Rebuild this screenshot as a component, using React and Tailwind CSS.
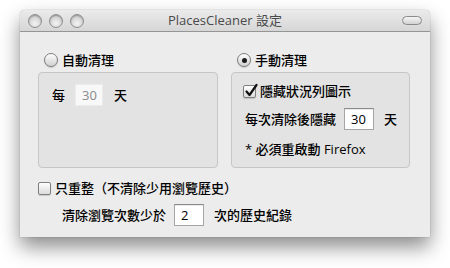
import React from "react";

const font = { fontFamily: '"Open Sans", "Noto Sans CJK TC", sans-serif' };

function Light() {
  return (
    <div className="w-[14px] h-[14px] rounded-full border border-[#8f8f8f] bg-[radial-gradient(circle_at_50%_70%,#f4f4f4_0%,#d6d6d6_55%,#b9b9b9_100%)] shadow-[inset_0_1px_1px_rgba(0,0,0,0.25)]" />
  );
}

function Radio({ checked }) {
  return (
    <div className="w-[14px] h-[14px] rounded-full border border-[#7c7c7c] bg-[linear-gradient(#ffffff,#e6e6e6_50%,#d2d2d2)] flex items-center justify-center shadow-[0_1px_1px_rgba(0,0,0,0.15)]">
      {checked && <div className="w-[5px] h-[5px] rounded-full bg-[#1a1a1a]" />}
    </div>
  );
}

function Check({ checked }) {
  return (
    <div className="w-[13px] h-[13px] rounded-[2px] border border-[#7f7f7f] bg-[linear-gradient(#ffffff,#ececec_50%,#dcdcdc)] relative shadow-[0_1px_1px_rgba(0,0,0,0.15)]">
      {checked && (
        <svg className="absolute left-[0px] top-[-3px]" width="15" height="15" viewBox="0 0 15 15">
          <path d="M2.5 8.5 L5.5 12 L12.5 2" fill="none" stroke="#111" strokeWidth="2.2" strokeLinecap="round" strokeLinejoin="round" />
        </svg>
      )}
    </div>
  );
}

function Field({ value, disabled, w = "w-[30px]" }) {
  return (
    <div
      className={`${w} h-[22px] flex items-center pl-[6px] text-[13px] leading-none ${
        disabled
          ? "bg-[#f8f8f8] text-[#8a8a8a] border border-[#ececec]"
          : "bg-white text-black border border-[#a5a5a5] border-t-[#8a8a8a] shadow-[inset_0_1px_0_rgba(0,0,0,0.08)]"
      }`}
    >
      {value}
    </div>
  );
}

export default function App() {
  return (
    <div className="w-[450px] h-[268px] bg-white overflow-hidden text-black font-medium" style={font}>
      <div className="ml-[20px] mt-[10px] w-[410px] h-[227px] bg-[#ececec] rounded-t-[5px] shadow-[0_10px_20px_rgba(0,0,0,0.45),0_0_1px_rgba(0,0,0,0.5)] flex flex-col">
        {/* title bar */}
        <div className="h-[22px] rounded-t-[5px] bg-[linear-gradient(#ebebeb,#d6d6d6)] border-b border-[#959595] flex items-center relative shrink-0">
          <div className="flex gap-[7px] pl-[8px]">
            <Light />
            <Light />
            <Light />
          </div>
          <div className="absolute inset-0 flex items-center justify-center text-[13px] text-[#4a4a4a] leading-none font-normal">
            PlacesCleaner 設定
          </div>
          <div className="absolute right-[8px] top-[6px] w-[20px] h-[9px] rounded-full border border-[#8a8a8a] bg-[linear-gradient(#f5f5f5,#d2d2d2)]" />
        </div>

        {/* body */}
        <div className="flex-1 pl-[18px] pr-[20px] pt-[20px] flex flex-col">
          <div className="flex gap-[13px]">
            {/* left */}
            <div className="w-[180px] flex flex-col">
              <div className="h-[16px] flex items-center gap-[4px] pl-[6px] text-[13px] leading-none">
                <Radio />
                <span>自動清理</span>
              </div>
              <div className="mt-[4px] h-[96px] rounded-[4px] border border-[#c6c6c6] bg-[#e3e3e3] pl-[13px] pt-[11px]">
                <div className="flex items-center text-[13px] leading-none">
                  <span>每</span>
                  <div className="ml-[10px]">
                    <Field value="30" disabled w="w-[28px]" />
                  </div>
                  <span className="ml-[11px]">天</span>
                </div>
              </div>
            </div>
            {/* right */}
            <div className="w-[179px] flex flex-col">
              <div className="h-[16px] flex items-center gap-[4px] pl-[6px] text-[13px] leading-none">
                <Radio checked />
                <span>手動清理</span>
              </div>
              <div className="mt-[4px] h-[96px] rounded-[4px] border border-[#c6c6c6] bg-[#e3e3e3] pl-[11px] pt-[12px] flex flex-col">
                <div className="flex items-center gap-[4px] text-[13px] leading-none h-[13px]">
                  <Check checked />
                  <span>隱藏狀況列圖示</span>
                </div>
                <div className="flex items-center text-[13px] leading-none mt-[10px] pl-[2px]">
                  <span>每次清除後隱藏</span>
                  <div className="ml-[8px]">
                    <Field value="30" />
                  </div>
                  <span className="ml-[10px]">天</span>
                </div>
                <div className="text-[13px] leading-none mt-[13px] pl-[2px]">* 必須重啟動 Firefox</div>
              </div>
            </div>
          </div>

          <div className="mt-[12px] h-[16px] flex items-center gap-[4px] text-[13px] leading-none">
            <Check />
            <span>只重整（不清除少用瀏覽歷史）</span>
          </div>
          <div className="mt-[8px] flex items-center pl-[24px] text-[13px] leading-none">
            <span>清除瀏覽次數少於</span>
            <div className="ml-[8px]">
              <Field value="2" />
            </div>
            <span className="ml-[10px]">次的歷史紀錄</span>
          </div>
        </div>
      </div>
    </div>
  );
}
